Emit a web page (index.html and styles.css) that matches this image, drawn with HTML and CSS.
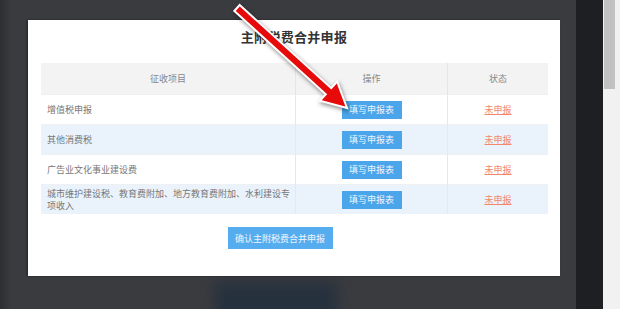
FILE: index.html
```html
<!DOCTYPE html>
<html lang="zh-CN">
<head>
    <meta charset="UTF-8">
    <meta name="viewport" content="width=device-width, initial-scale=1.0">
    <title>主附税费合并申报</title>
    <link rel="stylesheet" href="styles.css">
</head>
<body>
    <div class="screen">
        <div class="page">
            <div class="overlay">
                <div class="modal">
                    <h2 class="modal-title">主附税费合并申报</h2>
                    <table class="tax-table">
                        <thead>
                            <tr>
                                <th class="col-item">征收项目</th>
                                <th class="col-op">操作</th>
                                <th class="col-status">状态</th>
                            </tr>
                        </thead>
                        <tbody>
                            <tr>
                                <td>增值税申报</td>
                                <td class="center"><button class="fill-btn">填写申报表</button></td>
                                <td class="center"><a href="#" class="status">未申报</a></td>
                            </tr>
                            <tr class="alt">
                                <td>其他消费税</td>
                                <td class="center"><button class="fill-btn">填写申报表</button></td>
                                <td class="center"><a href="#" class="status">未申报</a></td>
                            </tr>
                            <tr>
                                <td>广告业文化事业建设费</td>
                                <td class="center"><button class="fill-btn">填写申报表</button></td>
                                <td class="center"><a href="#" class="status">未申报</a></td>
                            </tr>
                            <tr class="alt">
                                <td class="wrap">城市维护建设税、教育费附加、地方教育费附加、水利建设专项收入</td>
                                <td class="center"><button class="fill-btn">填写申报表</button></td>
                                <td class="center"><a href="#" class="status">未申报</a></td>
                            </tr>
                        </tbody>
                    </table>
                    <div class="modal-footer">
                        <button class="confirm-btn">确认主附税费合并申报</button>
                    </div>
                </div>
                <div class="blur-btn"></div>
            </div>
            <div class="side-band"></div>
        </div>
        <div class="scrollbar">
            <div class="thumb"></div>
        </div>
    </div>

    <!-- red pointer arrow drawn over the screenshot -->
    <svg class="arrow" width="620" height="309" viewBox="0 0 620 309">
        <polygon points="239.7,5 331.2,88.2 337.2,81.6 347,108 319.8,100.8 325.8,94.2 234.3,11"
                 fill="#e60a0a" stroke="#ffffff" stroke-width="2" stroke-linejoin="miter"/>
    </svg>
</body>
</html>
```

FILE: styles.css
```css
body {
    margin: 0;
    padding: 0;
    font-family: "Noto Sans CJK SC", "Liberation Sans", sans-serif;
    background-color: #3a3b3f;
    overflow: hidden;
}

.screen {
    display: flex;
    width: 620px;
    height: 309px;
}

.page {
    display: flex;
    width: 603px;
}

.overlay {
    position: relative;
    width: 576px;
    padding: 20px 0 0 28px;
    box-sizing: border-box;
    background: linear-gradient(to right, #2e2f33 0, #3a3b3f 12px);
}

.side-band {
    width: 27px;
    background-color: #1e1f23;
}

.scrollbar {
    width: 17px;
    background-color: #f1f1f1;
    padding-left: 1px;
}

.thumb {
    width: 11px;
    height: 89px;
    background-color: #c1c1c1;
}

/* Modal */
.modal {
    position: relative;
    z-index: 1;
    width: 532px;
    height: 256px;
    box-sizing: border-box;
    background-color: #fff;
    padding: 9px 13px 0 13px;
    box-shadow: -1px 0 2px rgba(0, 0, 0, 0.4);
}

.modal-title {
    margin: 0 0 18px 0;
    text-align: center;
    font-size: 13px;
    line-height: 16px;
    font-weight: bold;
    color: #333;
    letter-spacing: 0.3px;
}

.tax-table {
    width: 507px;
    border-collapse: collapse;
    font-size: 9px;
    color: #777;
}

.tax-table th {
    height: 31px;
    padding: 0;
    background-color: #f3f3f3;
    font-weight: normal;
    color: #888;
    border-left: 1px solid #e6e6e6;
}

.tax-table th:first-child,
.tax-table td:first-child {
    border-left: none;
}

.col-item {
    width: 254px;
}

.col-op {
    width: 151px;
}

.tax-table td {
    height: 29px;
    padding: 0 6px;
    border-left: 1px solid #e8e8e8;
    border-top: 1px solid #eef0f3;
    line-height: 12px;
}

.tax-table tr.alt td {
    background-color: #eaf3fc;
}

.tax-table td.wrap {
    padding-right: 2px;
}

.center {
    text-align: center;
}

.fill-btn {
    width: 60px;
    height: 18px;
    border: none;
    padding: 0;
    background-color: #4aa5ea;
    color: #eef6fd;
    font-family: inherit;
    font-size: 9px;
    cursor: pointer;
    vertical-align: middle;
}

.status {
    color: #f2876c;
    text-decoration: underline;
    font-size: 9px;
}

.modal-footer {
    display: flex;
    justify-content: center;
    padding: 13px 28px 0 0;
}

.confirm-btn {
    width: 105px;
    height: 22px;
    border: none;
    padding: 0;
    background-color: #55adef;
    color: #eef6fd;
    font-family: inherit;
    font-size: 9px;
    cursor: pointer;
}

/* blurred button behind the modal */
.blur-btn {
    position: absolute;
    left: 215px;
    top: 282px;
    width: 122px;
    height: 40px;
    background-color: #26313e;
    filter: blur(7px);
}

.arrow {
    position: absolute;
    left: 0;
    top: 0;
    z-index: 5;
    filter: drop-shadow(1px 2px 2px rgba(0, 0, 0, 0.45));
}
```
